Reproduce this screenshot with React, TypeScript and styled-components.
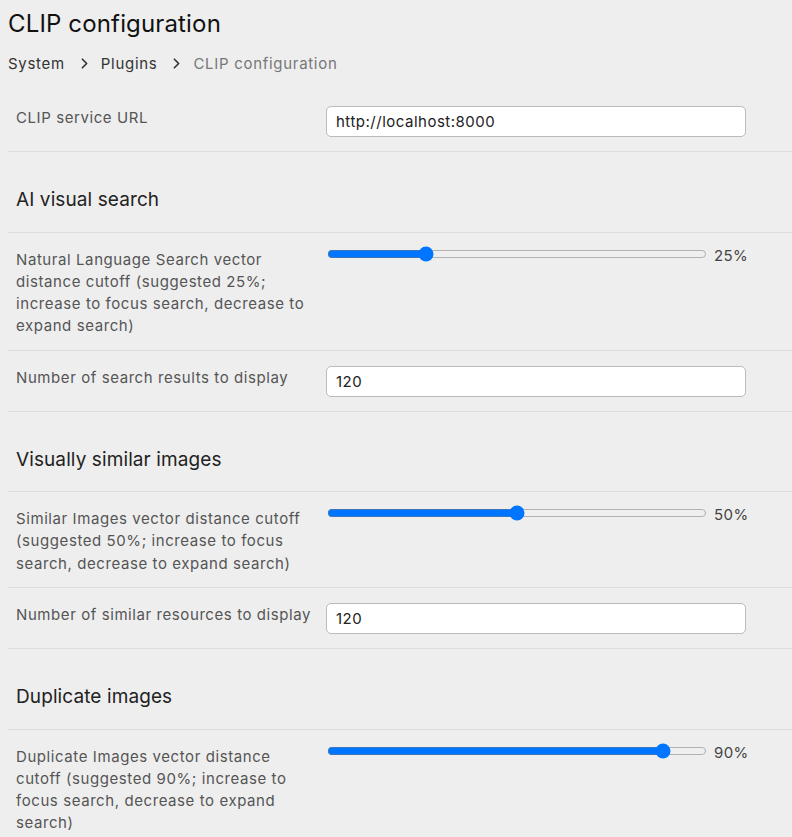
import React from 'react';
import styled, { createGlobalStyle } from 'styled-components';
import { ChevronRight } from 'lucide-react';

const GlobalStyle = createGlobalStyle`
  html, body {
    margin: 0;
    background: #eeeeee;
  }
  body {
    padding: 8px 0 0 8px;
    font-family: Inter, "Noto Sans", sans-serif;
    color: #222;
  }
`;

type SliderQuestion = { kind: 'slider'; label: string; value: number };
type TextQuestion = { kind: 'text'; label: string; value: string };
type Question = SliderQuestion | TextQuestion;

type Section = { title?: string; questions: Question[] };

const sections: Section[] = [
  {
    questions: [{ kind: 'text', label: 'CLIP service URL', value: 'http://localhost:8000' }]
  },
  {
    title: 'AI visual search',
    questions: [
      {
        kind: 'slider',
        label: 'Natural Language Search vector distance cutoff (suggested 25%; increase to focus search, decrease to expand search)',
        value: 25
      },
      { kind: 'text', label: 'Number of search results to display', value: '120' }
    ]
  },
  {
    title: 'Visually similar images',
    questions: [
      {
        kind: 'slider',
        label: 'Similar Images vector distance cutoff (suggested 50%; increase to focus search, decrease to expand search)',
        value: 50
      },
      { kind: 'text', label: 'Number of similar resources to display', value: '120' }
    ]
  },
  {
    title: 'Duplicate images',
    questions: [
      {
        kind: 'slider',
        label: 'Duplicate Images vector distance cutoff (suggested 90%; increase to focus search, decrease to expand search)',
        value: 90
      }
    ]
  }
];

export default function App (): React.ReactElement {
  return (
    <>
      <GlobalStyle />
      <Page>
        <Title>CLIP configuration</Title>
        <Breadcrumbs>
          <Crumb>System</Crumb>
          <Chevron size={17} strokeWidth={2.4} />
          <Crumb>Plugins</Crumb>
          <Chevron size={17} strokeWidth={2.4} />
          <Crumb $current>CLIP configuration</Crumb>
        </Breadcrumbs>
        <Form>
          {sections.map((section, i) => (
            <React.Fragment key={i}>
              {section.title ? <SectionHeader>{section.title}</SectionHeader> : null}
              {section.questions.map((q, j) => (
                <QuestionRow key={j}>
                  <Label>{q.label}</Label>
                  {q.kind === 'text'
                    ? <TextInput type='text' defaultValue={q.value} />
                    : (
                      <SliderWrap>
                        <Range type='range' min={0} max={100} defaultValue={q.value} />
                        <SliderValue>{q.value}%</SliderValue>
                      </SliderWrap>
                      )}
                </QuestionRow>
              ))}
            </React.Fragment>
          ))}
        </Form>
      </Page>
    </>
  );
}

const Page = styled.div`
  display: flex;
  flex-direction: column;
`;

const Title = styled.h1`
  margin: 0;
  font-size: 24px;
  line-height: 32px;
  font-weight: 400;
  letter-spacing: 0.15px;
  color: #111;
`;

const Breadcrumbs = styled.nav`
  display: flex;
  align-items: center;
  gap: 6px;
  margin-top: 12px;
  height: 22px;
  font-size: 15px;
  letter-spacing: 0.7px;
`;

const Crumb = styled.span<{ $current?: boolean }>`
  color: ${p => (p.$current ? '#777' : '#333')};
`;

const Chevron = styled(ChevronRight)`
  color: #333;
  margin: 0 2px 0 5px;
`;

const Form = styled.div`
  margin-top: 17px;
`;

const SectionHeader = styled.h2`
  margin: 0;
  padding: 36px 8px 19.5px;
  font-size: 19px;
  line-height: 24px;
  font-weight: 400;
  letter-spacing: 0.1px;
  color: #222;
  border-bottom: 1px solid #dcdcdc;
`;

const QuestionRow = styled.div`
  display: flex;
  align-items: flex-start;
  padding: 15px 0 12px 8px;
  border-bottom: 1px solid #dcdcdc;
`;

const Label = styled.label`
  width: 300px;
  flex-shrink: 0;
  margin-right: 10px;
  padding-top: 1px;
  font-size: 15px;
  line-height: 22.3px;
  letter-spacing: 0.58px;
  color: #555;
`;

const TextInput = styled.input`
  box-sizing: border-box;
  width: 420px;
  height: 31px;
  margin: 0 0 2px;
  padding: 0 9px;
  border: 1px solid #bbb;
  border-radius: 5px;
  background: #fff;
  font-family: inherit;
  font-size: 15px;
  letter-spacing: 0.5px;
  color: #222;
  outline: none;
`;

const SliderWrap = styled.div`
  display: flex;
  align-items: flex-start;
  gap: 5px;
  margin-top: -2px;
`;

const Range = styled.input`
  width: 380px;
  margin: 0 2px 0 1px;
  accent-color: #0075ff;
`;

const SliderValue = styled.span`
  font-size: 15px;
  line-height: 22px;
  letter-spacing: 0.4px;
  color: #444;
  margin-top: -1px;
`;
